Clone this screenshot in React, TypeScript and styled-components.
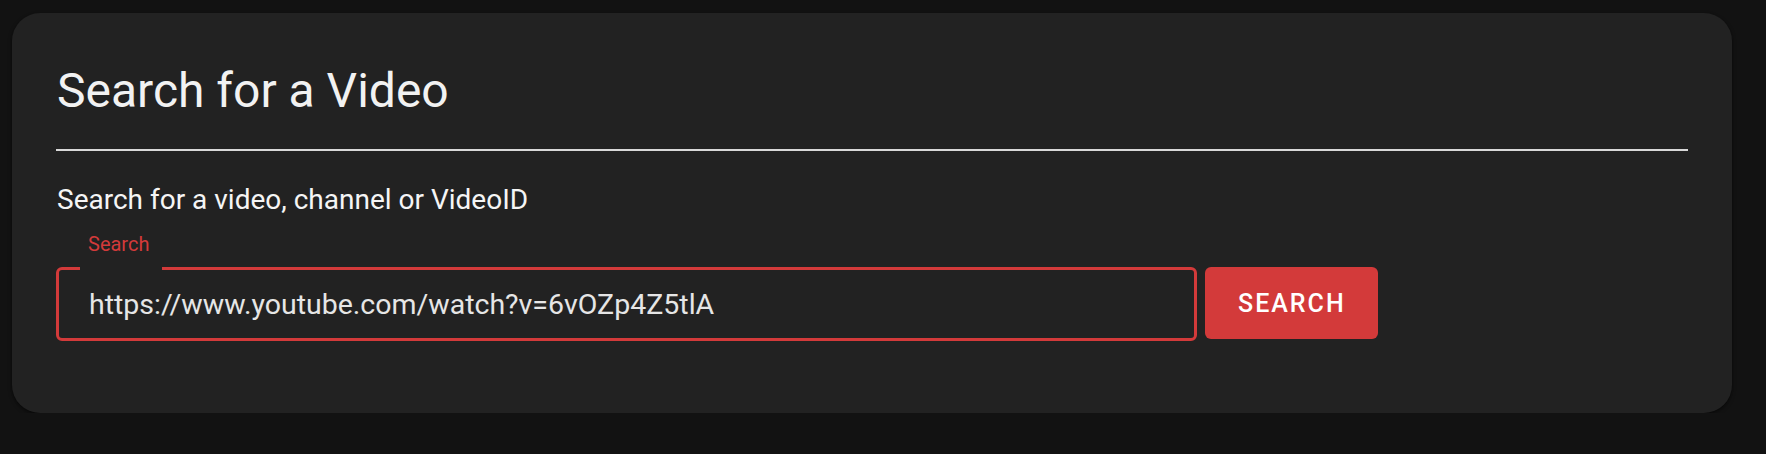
import * as React from "react";
import styled, { createGlobalStyle } from "styled-components";

const GlobalStyle = createGlobalStyle`
    html, body {
        margin: 0;
        padding: 0;
        background-color: #121212;
        font-family: Roboto, "Liberation Sans", sans-serif;
    }
`;

const Page = styled.div`
    padding: 13px 34px 0 12px;
`;

const Card = styled.section`
    background-color: #222222;
    border-radius: 28px;
    box-shadow: 0 2px 4px rgba(0,0,0,0.35), 0 1px 2px rgba(0,0,0,0.25);
    padding: 48px 44px 72px 44px;
`;

const Title = styled.h1`
    margin: 0 0 0 1px;
    font-size: 48px;
    font-weight: 400;
    line-height: 59px;
    color: #f2f2f2;
`;

const Divider = styled.hr`
    margin: 29px 0 0 0;
    border: none;
    height: 2px;
    background-color: #d9d9d9;
`;

const Subtitle = styled.h2`
    margin: 32px 0 0 1px;
    font-size: 28px;
    font-weight: 400;
    line-height: 33px;
    color: #f5f5f5;
`;

const FieldLabel = styled.label`
    display: block;
    margin: 18px 0 0 32px;
    font-size: 20px;
    line-height: 20px;
    color: #d33a3a;
`;

const SearchRow = styled.div`
    display: flex;
    align-items: flex-start;
    gap: 8px;
    margin-top: 13px;
`;

const Field = styled.div`
    position: relative;
    box-sizing: border-box;
    width: 1141px;
    height: 74px;
    border: 3px solid #d33a3a;
    border-radius: 6px;
    display: flex;
    align-items: center;
    padding: 0 30px;

    &::before {
        content: "";
        position: absolute;
        top: -3px;
        left: 21px;
        width: 82px;
        height: 3px;
        background-color: #222222;
    }
`;

const Input = styled.input`
    flex: 1;
    min-width: 0;
    border: none;
    outline: none;
    background: transparent;
    padding: 0;
    font-family: Roboto, "Liberation Sans", sans-serif;
    font-size: 28.5px;
    color: #e6e6e6;
`;

const SearchButton = styled.button`
    box-sizing: border-box;
    height: 72px;
    padding: 0 32px 0 33px;
    border: none;
    border-radius: 6px;
    background-color: #d33a3a;
    color: #ffffff;
    font-family: Roboto, "Liberation Sans", sans-serif;
    font-size: 25px;
    font-weight: 500;
    letter-spacing: 2px;
    text-transform: uppercase;
    cursor: pointer;
`;

export default function App() {
    const [query, setQuery] = React.useState("https://www.youtube.com/watch?v=6vOZp4Z5tlA");

    return (
        <Page>
            <GlobalStyle />
            <Card>
                <Title>Search for a Video</Title>
                <Divider />
                <Subtitle>Search for a video, channel or VideoID</Subtitle>
                <FieldLabel htmlFor="video-search">Search</FieldLabel>
                <SearchRow>
                    <Field>
                        <Input id="video-search" value={query} onChange={(e) => setQuery(e.target.value)} />
                    </Field>
                    <SearchButton>Search</SearchButton>
                </SearchRow>
            </Card>
        </Page>
    );
}
